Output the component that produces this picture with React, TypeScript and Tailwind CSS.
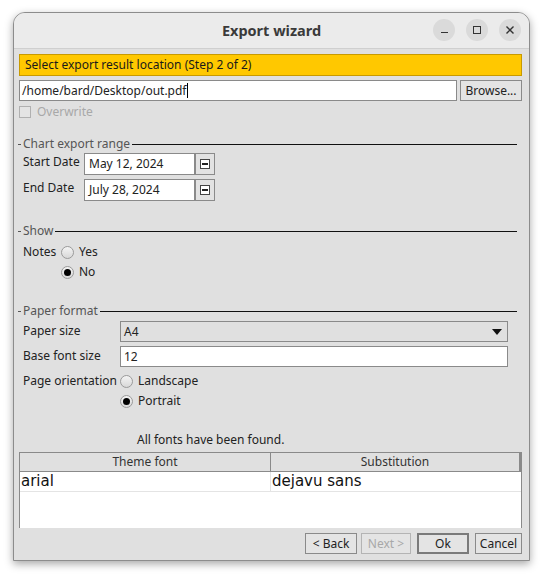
import React from 'react';

const font = { fontFamily: '"Noto Sans", "Open Sans", sans-serif' };

function TitledLine({ label }: { label: string }) {
  return (
    <div className="flex items-center h-[16px] pl-[4px] pr-[12px]">
      <div className="w-[3px] h-px bg-[#555]" />
      <span className="px-[2px] text-[12px] text-[#555] leading-none">{label}</span>
      <div className="flex-1 h-px bg-[#111]" />
    </div>
  );
}

function Radio({ checked }: { checked?: boolean }) {
  return (
    <span className="shrink-0 w-[13px] h-[13px] rounded-full border border-[#9a9a9a] bg-gradient-to-b from-[#f4f4f4] to-[#d8d8d8] flex items-center justify-center">
      {checked && <span className="w-[7px] h-[7px] rounded-full bg-black" />}
    </span>
  );
}

function DateRow({ label, value }: { label: string; value: string }) {
  return (
    <div className="flex items-center h-[22px] pl-[9px]">
      <span className="shrink-0 w-[61px] whitespace-nowrap text-[12px] text-[#222] -mt-[4px]">{label}</span>
      <div className="w-[111px] h-full bg-white border border-[#8a8a8a] flex items-center pl-[4px] text-[12px] text-[#222]">
        {value}
      </div>
      <div className="w-[20px] h-full border border-[#8a8a8a] bg-[#e2e2e2] flex items-center justify-center">
        <span className="w-[10px] h-[10px] border border-[#444] bg-white flex items-center justify-center">
          <span className="w-[6px] h-[1.5px] bg-[#222]" />
        </span>
      </div>
    </div>
  );
}

function Btn({ children, disabled, primary, w }: { children: React.ReactNode; disabled?: boolean; primary?: boolean; w: string }) {
  return (
    <div
      className={`${w} h-[21px] flex items-center justify-center text-[12px] bg-[#e4e4e4] ${
        primary ? 'border-2 border-[#7a7a7a]' : 'border border-[#8a8a8a]'
      } ${disabled ? 'text-[#a8a8a8] border-[#b4b4b4]' : 'text-[#222]'}`}
    >
      {children}
    </div>
  );
}

export default function App() {
  return (
    <div className="w-[543px] h-[577px] bg-white pt-[12px] pl-[13px]" style={font}>
      <div className="w-[517px] h-[549px] rounded-t-[12px] border border-[#8c8c8c] bg-[#e0e0e0] flex flex-col overflow-hidden shadow-[0_3px_8px_rgba(0,0,0,0.35)]">
        {/* title bar */}
        <div className="h-[36px] bg-[#ebebeb] border-b border-[#cfcfcf] flex items-center relative">
          <span className="flex-1 text-center text-[14.5px] font-bold text-[#3a3a3a]">Export wizard</span>
          <div className="absolute right-[8px] top-[6px] flex gap-[11px]">
            <span className="w-[22px] h-[22px] rounded-full bg-[#dadada] flex items-center justify-center">
              <span className="w-[7px] h-[1.5px] bg-[#333] mt-[5px]" />
            </span>
            <span className="w-[22px] h-[22px] rounded-full bg-[#dadada] flex items-center justify-center">
              <span className="w-[8px] h-[8px] border-[1.5px] border-[#333]" />
            </span>
            <span className="w-[22px] h-[22px] rounded-full bg-[#dadada] flex items-center justify-center">
              <svg width="10" height="10" viewBox="0 0 10 10">
                <path d="M1.5 1.5L8.5 8.5M8.5 1.5L1.5 8.5" stroke="#333" strokeWidth="1.4" />
              </svg>
            </span>
          </div>
        </div>

        <div className="flex flex-col pl-[5px] pr-[7px] pt-[5px]">
          <div className="h-[22px] bg-[#ffc800] border border-[#c89a00] flex items-center pl-[5px] text-[12px] text-[#1a1a1a]">
            Select export result location (Step 2 of 2)
          </div>
          <div className="flex mt-[4px] h-[21px] gap-[3px]">
            <div className="flex-1 bg-white border border-[#8a8a8a] flex items-center pl-[2px] text-[12px] text-[#222]">
              /home/bard/Desktop/out.pdf<span className="w-px h-[15px] bg-black" />
            </div>
            <div className="w-[62px] border border-[#8a8a8a] bg-[#e4e4e4] flex items-center justify-center text-[12px] text-[#222]">
              Browse...
            </div>
          </div>
          <div className="flex items-center h-[17px] mt-[2px] gap-[6px]">
            <span className="w-[12px] h-[12px] border border-[#b0b0b0] bg-[#e4e4e4]" />
            <span className="text-[12px] text-[#a8a8a8]">Overwrite</span>
          </div>
        </div>

        <div className="mt-[16px]">
          <TitledLine label="Chart export range" />
        </div>
        <div className="flex flex-col gap-[4px] mt-[1px]">
          <DateRow label="Start Date" value="May 12, 2024" />
          <DateRow label="End Date" value="July 28, 2024" />
        </div>

        <div className="mt-[22px]">
          <TitledLine label="Show" />
        </div>
        <div className="flex flex-col pl-[9px] mt-[3px] text-[12px] text-[#222]">
          <div className="flex items-center h-[20px]">
            <span className="shrink-0 w-[38px]">Notes</span>
            <Radio />
            <span className="ml-[5px]">Yes</span>
          </div>
          <div className="flex items-center h-[20px] pl-[38px]">
            <Radio checked />
            <span className="ml-[5px]">No</span>
          </div>
        </div>

        <div className="mt-[21px]">
          <TitledLine label="Paper format" />
        </div>
        <div className="flex flex-col pl-[9px] pr-[21px] mt-[2px] text-[12px] text-[#222]">
          <div className="flex items-center h-[21px]">
            <span className="shrink-0 w-[97px] whitespace-nowrap -mt-[2px]">Paper size</span>
            <div className="flex-1 h-full border border-[#8a8a8a] bg-[#e0e0e0] flex items-center pl-[3px] pr-[5px]">
              <span className="flex-1">A4</span>
              <svg width="10" height="6" viewBox="0 0 10 6">
                <path d="M0 0H10L5 6Z" fill="#111" />
              </svg>
            </div>
          </div>
          <div className="flex items-center h-[21px] mt-[4px]">
            <span className="shrink-0 w-[97px] whitespace-nowrap -mt-[2px]">Base font size</span>
            <div className="flex-1 h-full border border-[#8a8a8a] bg-white flex items-center pl-[3px]">12</div>
          </div>
          <div className="flex items-center h-[20px] mt-[4px]">
            <span className="shrink-0 w-[97px] whitespace-nowrap">Page orientation</span>
            <Radio />
            <span className="ml-[5px]">Landscape</span>
          </div>
          <div className="flex items-center h-[20px] pl-[97px]">
            <Radio checked />
            <span className="ml-[5px]">Portrait</span>
          </div>
        </div>

        <div className="mt-[22px] pl-[123px] h-[14px] flex items-center text-[12px] text-[#222]">
          All fonts have been found.
        </div>

        <div className="ml-[5px] mr-[7px] mt-[5px] h-[76px] border-x border-t border-[#8a8a8a] bg-white flex flex-col">
          <div className="flex h-[19px] bg-[#e0e0e0] border-b border-[#8a8a8a] text-[12px] text-[#333]">
            <div className="w-[251px] border-r border-[#8a8a8a] flex items-center justify-center">Theme font</div>
            <div className="flex-1 border-r-2 border-[#8a8a8a] flex items-center justify-center">Substitution</div>
          </div>
          <div
            className="flex h-[20px] border-b border-[#e4e4e4] text-[15px] text-[#111]"
            style={{ fontFamily: '"DejaVu Sans", sans-serif' }}
          >
            <div className="w-[251px] border-r border-[#e4e4e4] flex items-center pl-px">arial</div>
            <div className="flex-1 flex items-center pl-px">dejavu sans</div>
          </div>
        </div>

        <div className="flex justify-end pr-[7px] mt-[5px]">
          <Btn w="w-[52px]">&lt; Back</Btn>
          <div className="w-[4px]" />
          <Btn w="w-[50px]" disabled>Next &gt;</Btn>
          <div className="w-[6px]" />
          <Btn w="w-[52px]" primary>Ok</Btn>
          <div className="w-[6px]" />
          <Btn w="w-[47px]">Cancel</Btn>
        </div>
      </div>
    </div>
  );
}
